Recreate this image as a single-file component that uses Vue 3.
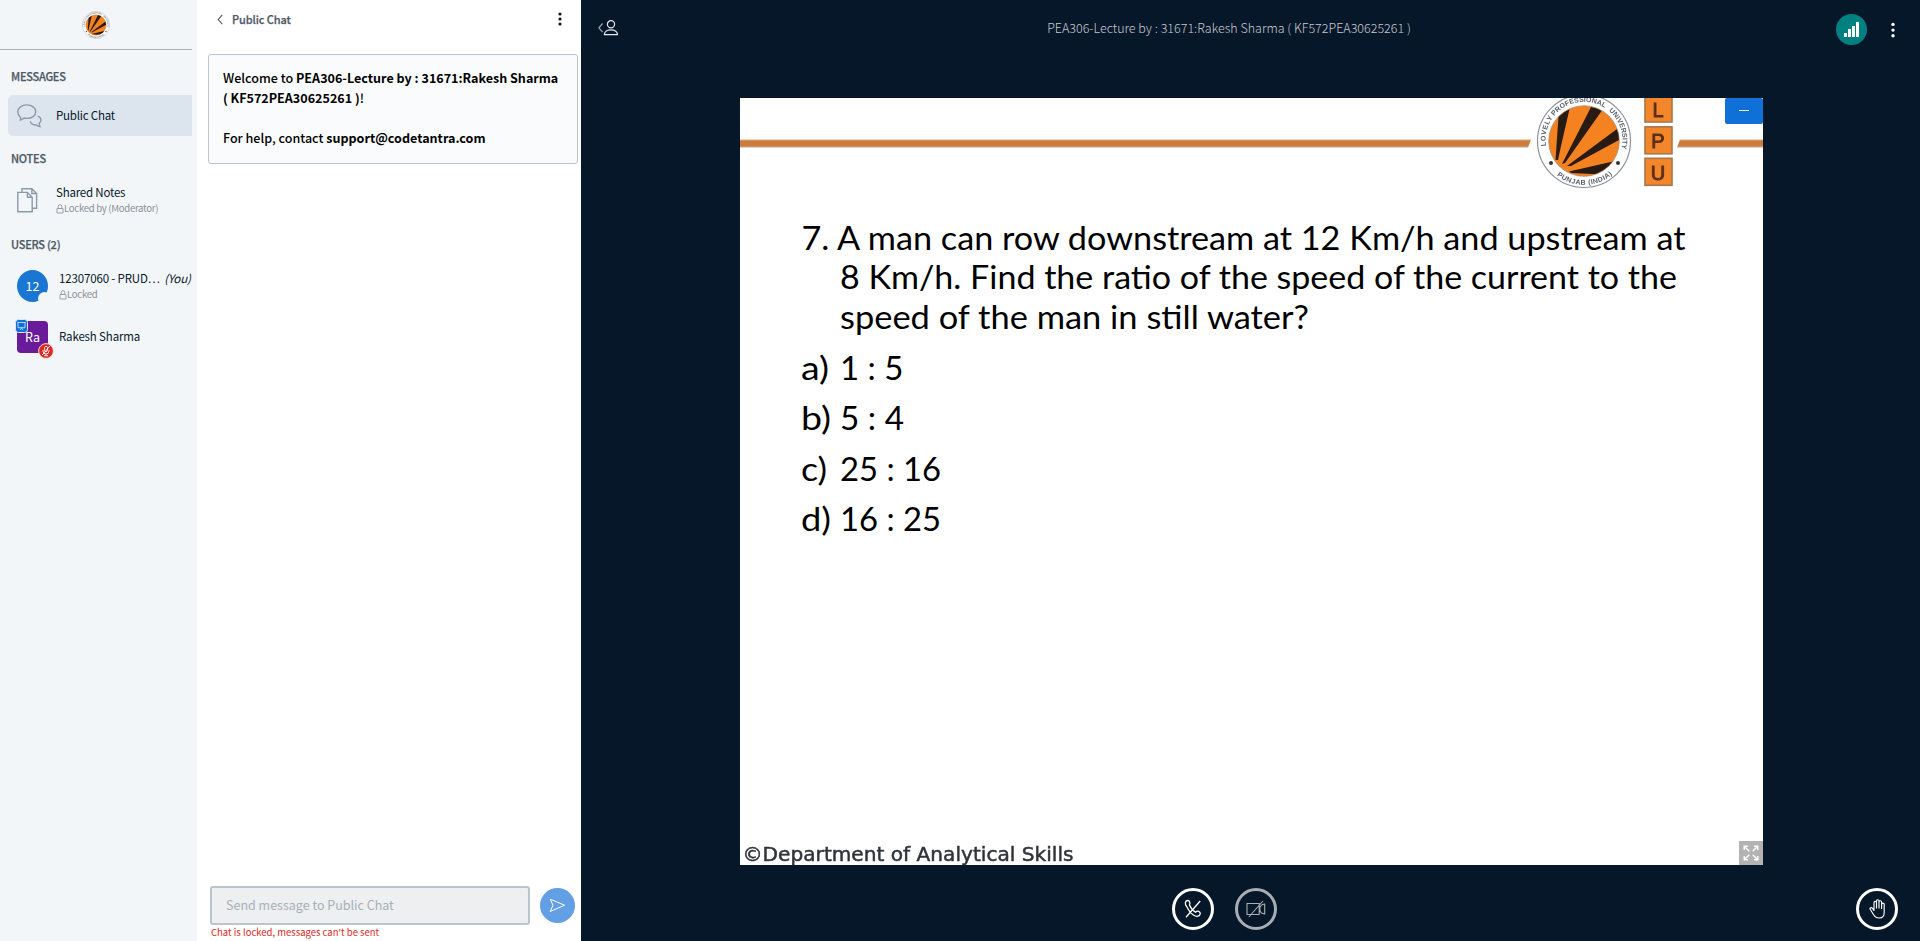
<script setup>
const question = [
  { x: 801.5, y: 249.6, w: 884, t: '7. A man can row downstream at 12 Km/h and upstream at' },
  { x: 840, y: 289.2, w: 837, t: '8 Km/h. Find the ratio of the speed of the current to the' },
  { x: 840, y: 329, w: 469, t: 'speed of the man in still water?' },
]
const options = [
  { y: 380, k: 'a)', kw: 28, t: '1 : 5', w: 63.5 },
  { y: 430, k: 'b)', kw: 30, t: '5 : 4', w: 64 },
  { y: 480.8, k: 'c)', kw: 26, t: '25 : 16', w: 101 },
  { y: 531, k: 'd)', kw: 30, t: '16 : 25', w: 101 },
]
const tiles = [
  { c: 'L', y: 95 },
  { c: 'P', y: 126.8 },
  { c: 'U', y: 158.3 },
]
</script>

<template>
  <div class="app">
    <svg class="defs" width="0" height="0">
      <defs>
        <path id="ring-top" d="M-37.5 8A38.5 38.5 0 1 1 37.5 8" />
        <path id="ring-bottom" d="M-33 29A44 44 0 0 0 33 29" />
        <clipPath id="disc"><circle r="35" /></clipPath>
        <symbol id="crest" viewBox="-48 -48 96 96">
          <circle r="46.5" fill="#fff" stroke="#8d939e" stroke-width="1.2" />
          <circle r="35.3" fill="#f58220" stroke="#a78d79" stroke-width=".8" />
          <g clip-path="url(#disc)" fill="#2a1b12">
            <path d="M-28.5 19L-25-32L-14-34L-23 5L-26 19Z" />
            <path d="M-22 23L7-34L19-32L-19 22Z" />
            <path d="M-17 25L33-12L37-2L-13 25Z" />
            <path d="M-15 30.5L31 20L26 34L8 33L-13 32Z" />
          </g>
          <g class="ring">
            <text><textPath href="#ring-top" textLength="30" startOffset="3">LOVELY</textPath></text>
            <text><textPath href="#ring-top" textLength="56" startOffset="35">PROFESSIONAL</textPath></text>
            <text><textPath href="#ring-top" textLength="42" startOffset="96">UNIVERSITY</textPath></text>
            <text><textPath href="#ring-bottom" textLength="60" startOffset="8">PUNJAB (INDIA)</textPath></text>
          </g>
          <circle cx="-33" cy="22" r="2" fill="#333" /><circle cx="34" cy="22" r="2" fill="#333" />
        </symbol>
      </defs>
    </svg>

    <aside class="side">
      <div class="brand"><svg width="28" height="28"><use href="#crest" /></svg></div>
      <h2>MESSAGES</h2>
      <div class="row selected">
        <svg class="ico" width="25" height="24" viewBox="0 0 25 24">
          <path d="M3.4 16.2C4.2 15 4.2 14 3 12.8C1.6 11.3.8 9.8.8 7.8C.8 3.9 4.8.9 9.8.9S18.8 3.9 18.8 7.8S14.8 14.4 9.8 14.4C8.6 14.4 7.8 14.3 7 14C5.8 15.3 4 16 2.6 16.2" />
          <path d="M20.6 12.1C22.8 12.7 24 14.2 24 16C24 17.4 23.2 18.4 22.3 19.2C22 20.3 22.5 21.4 23 22.5C21.5 22.3 20.2 21.7 19.3 20.9C16.5 21.1 14 20.1 13.3 17.4" />
        </svg>
        <span class="label">Public Chat</span>
      </div>
      <h2 class="h-notes">NOTES</h2>
      <div class="row notes">
        <svg class="ico" width="21" height="25" viewBox="0 0 21 25">
          <path d="M5 4V.8H14.8L19.6 5.5V20.3H15.5M14.8.8V5.5H19.6M.8 4.4H10.4L15.2 9.2V23.8H.8ZM10.4 4.4V9.2H15.2" />
        </svg>
        <div class="stack">
          <span class="label">Shared Notes</span>
          <span class="sub">
            <svg width="8" height="10" viewBox="0 0 8 10"><path d="M1 4.5H7V9H1ZM2.2 4.5V2.5A1.8 1.8 0 0 1 5.8 2.5V4.5" /></svg>
            <span>Locked by (Moderator)</span>
          </span>
        </div>
      </div>
      <h2 class="h-users">USERS (2)</h2>
      <div class="row user">
        <div class="avatar round">12<i class="notch"></i></div>
        <div class="stack">
          <span class="label wide">12307060 - PRUD… <em>(You)</em></span>
          <span class="sub">
            <svg width="8" height="10" viewBox="0 0 8 10"><path d="M1 4.5H7V9H1ZM2.2 4.5V2.5A1.8 1.8 0 0 1 5.8 2.5V4.5" /></svg>
            <span>Locked</span>
          </span>
        </div>
      </div>
      <div class="row user second">
        <div class="avatar square">Ra
          <svg class="presenter" width="13" height="14" viewBox="0 0 13 14">
            <rect x=".5" y=".5" width="12" height="13" rx="3" fill="#0f70d7" stroke="#dbe8f7" />
            <path d="M2.2 3.5H10.8M3 3.5V8.7H10V3.5M5 11L6.5 8.8L8 11" fill="none" stroke="#d5e7fa" stroke-width=".8" />
          </svg>
          <svg class="muted" width="16" height="16" viewBox="0 0 16 16">
            <circle cx="8" cy="8" r="7.4" fill="#df2721" stroke="#f8dcdc" />
            <path d="M6.6 4.5A1.5 1.5 0 0 1 9.5 4.5V7.5A1.5 1.5 0 0 1 6.6 7.5ZM5 7V8A3 3 0 0 0 11 8V7M8 11V12.7M6 12.7H10M11.8 3L4.3 12" fill="none" stroke="#fff" stroke-width=".9" />
          </svg>
        </div>
        <span class="label rakesh">Rakesh Sharma</span>
      </div>
    </aside>

    <section class="chat">
      <header class="chat-head">
        <svg width="7" height="11" viewBox="0 0 7 11"><path d="M5.3.8L1.2 5.5L5.3 10.2" fill="none" stroke="#4e5a66" stroke-width="1.1" /></svg>
        <span class="chat-title">Public Chat</span>
        <svg class="more" width="4" height="14" viewBox="0 0 4 14" fill="#06172a"><circle cx="2" cy="2" r="1.6" /><circle cx="2" cy="7" r="1.6" /><circle cx="2" cy="12" r="1.6" /></svg>
      </header>
      <div class="welcome">
        <p><span>Welcome to </span><b>PEA306-Lecture by : 31671:Rakesh Sharma</b></p>
        <p><b>( KF572PEA30625261 )</b>!</p>
        <p class="help"><span>For help, contact </span><b>support@codetantra.com</b></p>
      </div>
      <div class="composer">
        <div class="input">Send message to Public Chat</div>
        <div class="send">
          <svg width="17" height="15" viewBox="0 0 17 15"><path d="M1.2 1.2L15.6 7.2L1.2 13.5L4 7.3Z" fill="none" stroke="#fff" stroke-width="1" /></svg>
        </div>
      </div>
      <div class="error">Chat is locked, messages can't be sent</div>
    </section>

    <main class="stage">
      <header class="topbar">
        <svg class="toggle" width="21" height="16" viewBox="0 0 21 16" fill="none" stroke="#e6e9ec" stroke-width="1.2">
          <path d="M4.5 3.5L.9 7.8L4.5 12" stroke="#9ba3ac" />
          <circle cx="13" cy="4.3" r="3.6" /><path d="M6.4 14.6C6.4 8.2 19.5 8.2 19.5 14.6Z" />
        </svg>
        <h1>PEA306-Lecture by : 31671:Rakesh Sharma ( KF572PEA30625261 )</h1>
        <div class="tools">
          <div class="signal">
            <svg width="16" height="15" viewBox="0 0 16 15" fill="#fff"><path d="M0 11H3V15H0ZM4 7H7V15H4ZM8 4H11V15H8ZM12 0H15V15H12Z" /></svg>
          </div>
          <svg width="4" height="16" viewBox="0 0 4 16" fill="#fff"><circle cx="2" cy="2.4" r="1.7" /><circle cx="2" cy="8.1" r="1.7" /><circle cx="2" cy="13.8" r="1.7" /></svg>
        </div>
      </header>

      <div class="slide">
        <svg width="1023" height="767" viewBox="740 98 1023 767">
          <defs>
            <linearGradient id="bar" x2="0" y2="1">
              <stop offset="0" stop-color="#e0b184" /><stop offset=".2" stop-color="#ce7b39" />
              <stop offset=".75" stop-color="#ce7d42" /><stop offset="1" stop-color="#c7a794" />
            </linearGradient>
          </defs>
          <path d="M740 139.5H1531L1528 147.5H740ZM1680 139.5H1763V147.5H1677Z" fill="url(#bar)" />
          <use href="#crest" x="1536" y="93" width="96" height="96" class="soft" />
          <g class="soft">
            <g v-for="t in tiles" :key="t.c">
              <rect x="1645" :y="t.y" width="27" height="27" fill="#f3862b" stroke="#a8774d" stroke-width="1.6" />
              <text x="1658" :y="t.y + 21.5" class="tile" text-anchor="middle">{{ t.c }}</text>
            </g>
          </g>
          <g class="body">
            <text v-for="l in question" :key="l.y" :x="l.x" :y="l.y" :textLength="l.w" lengthAdjust="spacingAndGlyphs">{{ l.t }}</text>
            <g v-for="o in options" :key="o.y">
              <text x="801" :y="o.y" :textLength="o.kw" lengthAdjust="spacingAndGlyphs">{{ o.k }}</text>
              <text x="840" :y="o.y" :textLength="o.w" lengthAdjust="spacingAndGlyphs">{{ o.t }}</text>
            </g>
          </g>
          <text x="742.5" y="861.3" textLength="331" lengthAdjust="spacingAndGlyphs" class="credit">©Department of Analytical Skills</text>
        </svg>
        <div class="minimize"></div>
        <div class="full">
          <svg width="16" height="16" viewBox="0 0 16 16" fill="none" stroke="#fff" stroke-width="1.4">
            <path d="M6.3 6.3L1.5 1.5M1.2 5V1.2H5M9.7 6.3L14.5 1.5M11 1.2H14.8V5M6.3 9.7L1.5 14.5M1.2 11V14.8H5M9.7 9.7L14.5 14.5M11 14.8H14.8V11" />
          </svg>
        </div>
      </div>

      <footer class="actions">
        <div class="btn">
          <svg width="18" height="20" viewBox="0 0 18 20" fill="none" stroke="#fff" stroke-width="1.3">
            <path d="M2.8 7.7C.4 5.1 1.1 1.7 3.6 1.5C5.8 1.3 6.3 4.3 5.5 6C6.7 9.2 8.9 11.6 11.6 13.2C13.5 11.2 16.5 12.3 16.2 14.7C16 17.5 12.5 18.1 9.8 16.3C7.1 14.6 4.6 11.3 2.8 7.7ZM16.2 2L2 18.3" />
          </svg>
        </div>
        <div class="btn dim">
          <svg width="20" height="18" viewBox="0 0 20 18" fill="none" stroke="#a8aeb4" stroke-width="1.1">
            <path d="M1 3.5H13.2V14.5H1ZM18.7 4C15.5 4.3 13.8 6.3 13.8 9S15.5 13.7 18.7 14ZM17 1L2.8 17" />
          </svg>
        </div>
        <div class="btn hand">
          <svg width="17" height="20" viewBox="0 0 17 20" fill="none" stroke="#fff" stroke-width="1.15" stroke-linejoin="round">
            <path d="M5 12V3.7C5 1.9 7.5 1.9 7.5 3.7V9.5M7.5 9V2C7.5.3 10 .3 10 2V9.5M10 3C10 1.3 12.6 1.3 12.6 3V10M12.6 5.2C12.6 3.7 15.2 3.7 15.2 5.2V13.5C15.2 17 13.3 19 10.3 19C7.3 19 5.8 17.8 4.6 15.7L1.2 10.3C.5 8.8 2.4 8 3.3 9.2L5 11.5" />
          </svg>
        </div>
      </footer>
    </main>
  </div>
</template>

<style>
body { margin: 0; overflow: hidden; }
</style>

<style scoped>
* { box-sizing: border-box; }
.app { display: flex; width: 1920px; height: 941px; overflow: hidden; font-family: "Noto Sans CJK SC", "Noto Sans", sans-serif; background: #06172a; }
.defs { position: absolute; }
svg { display: block; flex: none; }
.side { width: 197px; height: 941px; background: #f3f6f9; display: flex; flex-direction: column; }
.brand { width: 192px; height: 50px; flex: none; border-bottom: 1px solid #a9b0b8; display: flex; justify-content: center; padding-top: 11px; }
h2 { margin: 16px 0 0 11px; height: 20px; line-height: 20px; font-size: 11px; font-weight: 500; color: #4e5a66; white-space: nowrap; letter-spacing: -.25px; -webkit-text-stroke: .25px #4e5a66; }
.row { display: flex; }
.selected { width: 184px; height: 41px; margin: 9px 0 0 8px; padding-left: 9px; background: #dce4ee; border-radius: 5px 0 0 5px; align-items: center; }
.ico { fill: none; stroke: #8b9bab; stroke-width: 1.4; }
.label { font-size: 11.5px; line-height: 20px; color: #06172a; white-space: nowrap; letter-spacing: -.2px; }
.selected .label { margin: -1px 0 0 14px; }
h2.h-notes { margin-top: 12px; }
.notes { margin: 20px 0 0 17px; height: 30px; }
.notes .stack { margin: -6px 0 0 18px; }
.stack { display: flex; flex-direction: column; }
.sub { display: flex; align-items: center; height: 13px; line-height: 13px; font-size: 9.6px; color: #8b9199; white-space: nowrap; letter-spacing: -.3px; }
.sub svg { fill: none; stroke: #9aa0a7; stroke-width: 1; margin-top: 1px; }
h2.h-users { margin-top: 16px; }
.user { margin: 16px 0 0 17px; height: 32px; }
.second { margin-top: 19px; }
.avatar { position: relative; width: 31px; height: 32px; flex: none; color: #fff; font-size: 12.5px; line-height: 31px; text-align: center; }
.round { background: #1976d2; border-radius: 50%; }
.notch { position: absolute; right: -3px; bottom: -3px; width: 13px; height: 13px; border-radius: 50%; background: #f3f6f9; }
.square { background: #6a1b9a; border-radius: 4px; }
.presenter { position: absolute; left: -2px; top: -2px; }
.muted { position: absolute; left: 21px; top: 22px; }
.user .stack { margin: -2px 0 0 11px; }
.user .stack .sub { margin-top: 0; }
.user .label { letter-spacing: -.15px; }
.rakesh { margin: 5px 0 0 11px; }
em { font-style: italic; margin-left: 2px; }

.chat { width: 384px; height: 941px; background: #fff; display: flex; flex-direction: column; }
.chat-head { height: 38px; flex: none; display: flex; align-items: center; padding: 0 19.5px 0 20px; }
.chat-title { margin-left: 8px; font-size: 11px; font-weight: 500; color: #4e5a66; line-height: 20px; margin-top: -1px; letter-spacing: -.1px; -webkit-text-stroke: .25px #4e5a66; }
.more { margin-left: auto; }
.welcome { width: 370px; height: 110px; margin: 16px 0 0 11px; padding: 13px 0 0 14px; border: 1px solid #b9c5cf; border-radius: 3px; background: #fafbfd; font-size: 12.55px; color: #000; }
p { margin: 0; height: 20px; line-height: 20px; white-space: nowrap; font-weight: 500; }
.help { margin-top: 20px; }
.composer { margin: 722px 0 0 13px; display: flex; align-items: center; }
.input { width: 320px; height: 39px; border: 2px solid #b9c5cf; border-radius: 3px; background: #edeff1; padding-left: 14px; font-size: 12.5px; line-height: 34px; color: #a7b0b8; }
.send { width: 35px; height: 35px; margin-left: 10px; border-radius: 50%; background: #629fe4; display: flex; align-items: center; justify-content: center; }
.error { margin: -1px 0 0 14px; font-size: 9.5px; line-height: 16px; color: #df2721; white-space: nowrap; }

.stage { flex: 1; height: 941px; display: flex; flex-direction: column; background: #06172a; }
.topbar { height: 98px; flex: none; display: grid; grid-template-columns: 449px 364px 1fr; align-items: start; padding: 14px 25.5px 0 17px; }
.toggle { margin-top: 6px; }
h1 { margin: 4px 0 0 0; font-size: 12.5px; font-weight: 300; line-height: 20px; color: #c6cacf; white-space: nowrap; text-align: center; }
.tools { display: flex; justify-content: flex-end; align-items: center; gap: 23.5px; }
.signal { width: 31px; height: 31px; border-radius: 50%; background: #008081; display: flex; align-items: center; justify-content: center; padding-left: 1px; }
.slide { position: relative; width: 1023px; height: 767px; margin-left: 159px; background: #fff; }
.soft { filter: blur(.45px); }
.ring text { font: 700 7px "Liberation Sans", sans-serif; fill: #5c6068; }
.tile { font: 400 20px "Liberation Sans", sans-serif; fill: #5a3015; stroke: #5a3015; stroke-width: .9px; }
.body text { font: 400 33.2px Lato, sans-serif; fill: #000; }
.credit { font: 400 19.5px "DejaVu Sans", sans-serif; fill: #30343a; stroke: #30343a; stroke-width: .5px; filter: blur(.5px); }
.minimize { position: absolute; right: 0; top: 0; width: 38px; height: 26px; background: #0f70d7; border-radius: 2px; display: flex; align-items: center; justify-content: center; }
.minimize::after { content: ""; width: 10px; height: 1px; background: #fff; margin-top: -2px; }
.full { position: absolute; right: 0; bottom: 0; width: 24px; height: 24px; background: #b3b3b3; display: flex; align-items: center; justify-content: center; }
.actions { flex: 1; display: grid; grid-template-columns: 42px 42px 42px; align-items: start; padding: 23px 0 0 591px; column-gap: 21px; }
.btn { width: 42px; height: 42px; border: 3px solid #fff; border-radius: 50%; display: flex; align-items: center; justify-content: center; }
.dim { border-color: #a8aeb4; }
.hand { justify-self: start; margin-left: 558px; }
</style>
